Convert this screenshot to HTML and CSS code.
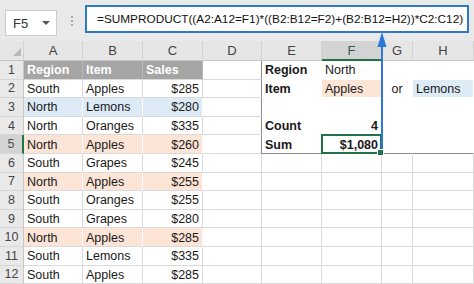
FILE: index.html
```html
<!DOCTYPE html>
<html>
<head>
<meta charset="utf-8">
<link rel="stylesheet" href="styles.css">
</head>
<body>
<div class="topbar">
  <div class="namebox"><span>F5</span><span class="caret"></span></div>
  <div class="dots"><i></i><i></i><i></i></div>
  <div class="formula">=SUMPRODUCT((A2:A12=F1)*((B2:B12=F2)+(B2:B12=H2))*C2:C12)</div>
</div>
<div class="sheet">
  <div class="ch corner"><svg width="8" height="8" viewBox="0 0 8 8"><polygon points="8,0 8,8 0,8" fill="#b9b9b9"/></svg></div>
  <div class="ch">A</div><div class="ch">B</div><div class="ch">C</div><div class="ch">D</div><div class="ch">E</div><div class="ch sel">F</div><div class="ch">G</div><div class="ch">H</div>

  <div class="rh">1</div>
  <div class="c hd b">Region</div><div class="c hd b">Item</div><div class="c hd b">Sales</div><div class="c dx"></div>
  <div class="c bx b">Region</div><div class="c bx">North</div><div class="c bx"></div><div class="c bx"></div>

  <div class="rh">2</div>
  <div class="c">South</div><div class="c">Apples</div><div class="c r">$285</div><div class="c dx"></div>
  <div class="c bx b">Item</div><div class="c bx pe">Apples</div><div class="c bx ctr">or</div><div class="c bx bl">Lemons</div>

  <div class="rh">3</div>
  <div class="c bl">North</div><div class="c bl">Lemons</div><div class="c bl r">$280</div><div class="c dx"></div>
  <div class="c bx"></div><div class="c bx"></div><div class="c bx"></div><div class="c bx"></div>

  <div class="rh">4</div>
  <div class="c">North</div><div class="c">Oranges</div><div class="c r">$335</div><div class="c dx"></div>
  <div class="c bx b">Count</div><div class="c bx b r">4</div><div class="c bx"></div><div class="c bx"></div>

  <div class="rh sel">5</div>
  <div class="c pe">North</div><div class="c pe">Apples</div><div class="c pe r">$260</div><div class="c dx"></div>
  <div class="c bx bb b">Sum</div><div class="c bx bb b r active">$1,080</div><div class="c bx bb"></div><div class="c bx bb"></div>

  <div class="rh">6</div>
  <div class="c">South</div><div class="c">Grapes</div><div class="c r">$245</div><div class="c"></div><div class="c"></div><div class="c"></div><div class="c"></div><div class="c"></div>

  <div class="rh">7</div>
  <div class="c pe">North</div><div class="c pe">Apples</div><div class="c pe r">$255</div><div class="c"></div><div class="c"></div><div class="c"></div><div class="c"></div><div class="c"></div>

  <div class="rh">8</div>
  <div class="c">South</div><div class="c">Oranges</div><div class="c r">$255</div><div class="c"></div><div class="c"></div><div class="c"></div><div class="c"></div><div class="c"></div>

  <div class="rh">9</div>
  <div class="c">South</div><div class="c">Grapes</div><div class="c r">$280</div><div class="c"></div><div class="c"></div><div class="c"></div><div class="c"></div><div class="c"></div>

  <div class="rh">10</div>
  <div class="c pe">North</div><div class="c pe">Apples</div><div class="c pe r">$285</div><div class="c"></div><div class="c"></div><div class="c"></div><div class="c"></div><div class="c"></div>

  <div class="rh">11</div>
  <div class="c">South</div><div class="c">Lemons</div><div class="c r">$335</div><div class="c"></div><div class="c"></div><div class="c"></div><div class="c"></div><div class="c"></div>

  <div class="rh">12</div>
  <div class="c">South</div><div class="c">Apples</div><div class="c r">$285</div><div class="c"></div><div class="c"></div><div class="c"></div><div class="c"></div><div class="c"></div>
</div>
<svg class="arrow" width="14" height="124" viewBox="0 0 14 124">
  <line x1="7" y1="10" x2="7" y2="124" stroke="#2b7bd6" stroke-width="2"/>
  <polygon points="7,0 2.5,15 11.5,15" fill="#2b7bd6"/>
</svg>
</body>
</html>
```

FILE: styles.css
```css
* { box-sizing: border-box; }
html, body { margin: 0; padding: 0; }
body {
  width: 474px;
  height: 284px;
  overflow: hidden;
  position: relative;
  background: #fff;
  font-family: "Liberation Sans", Arial, sans-serif;
  color: #1a1a1a;
}
.topbar {
  height: 41px;
  background: #e9e9e9;
  display: flex;
  align-items: flex-start;
}
.namebox {
  margin: 10px 0 0 5px;
  width: 52px;
  height: 26px;
  background: #fff;
  border: 1px solid #cdcdcd;
  display: flex;
  align-items: center;
  justify-content: space-between;
  padding: 0 6px 0 7px;
  font-size: 13px;
  color: #333;
}
.caret {
  width: 0;
  height: 0;
  border-left: 4px solid transparent;
  border-right: 4px solid transparent;
  border-top: 4px solid #555;
}
.dots {
  margin: 16px 0 0 14px;
  display: flex;
  flex-direction: column;
  gap: 2px;
}
.dots i {
  display: block;
  width: 2px;
  height: 2px;
  background: #a8a8a8;
}
.formula {
  margin: 5px 0 0 12px;
  width: 384px;
  height: 28px;
  background: #fff;
  border: 2px solid #2e78c4;
  padding-left: 10px;
  display: flex;
  align-items: center;
  font-size: 11.8px;
  color: #111;
  white-space: nowrap;
}
.sheet {
  display: grid;
  grid-template-columns: 24px 59px 60px 60px 59px 60px 60px 31px 61px;
  grid-template-rows: 20px repeat(12, 18.6px);
}
.ch {
  background: #e6e6e6;
  border-right: 1px solid #d2d2d2;
  border-bottom: 1px solid #c4c4c4;
  display: flex;
  align-items: center;
  justify-content: center;
  font-size: 13px;
  color: #444;
}
.ch.corner {
  align-items: flex-end;
  justify-content: flex-end;
  padding: 0 2px 4px 0;
}
.ch.sel {
  background: #d3d3d3;
  border-bottom: 2px solid #217346;
  color: #2f5f43;
}
.rh {
  background: #e9e9e9;
  border-right: 1px solid #c8c8c8;
  border-bottom: 1px solid #d6d6d6;
  display: flex;
  align-items: center;
  justify-content: center;
  font-size: 12.5px;
  color: #444;
}
.rh.sel {
  background: #d3d3d3;
  border-right: 2px solid #217346;
  color: #555;
}
.c {
  border-right: 1px solid #dadada;
  border-bottom: 1px solid #dadada;
  display: flex;
  align-items: center;
  padding: 1px 3px 0 3px;
  font-size: 12.5px;
  white-space: nowrap;
  background: #fff;
}
.c.r { justify-content: flex-end; }
.c.ctr { justify-content: center; }
.c.b { font-weight: bold; }
.c.hd { background: #a5a5a5; color: #fff; border-right-color: #b8b8b8; }
.c.pe { background: #fce4d6; border-right-color: #fff; }
.c.bl { background: #ddebf7; border-right-color: #fff; }
.c.dx { border-right-color: #8a8a8a; }
.c.bx { border-right-color: #fff; border-bottom-color: #fff; }
.c.bx.pe, .c.bx.bl { border-right-color: #fff; }
.c.bb { border-bottom-color: #8a8a8a; }
.c.active { position: relative; }
.c.active::after {
  content: "";
  position: absolute;
  left: -1px;
  top: -1px;
  right: -1px;
  bottom: -1px;
  border: 2px solid #217346;
}
.c.active::before {
  content: "";
  position: absolute;
  right: -3px;
  bottom: -3px;
  width: 5px;
  height: 5px;
  background: #217346;
  border: 1px solid #fff;
  z-index: 2;
}
.arrow {
  position: absolute;
  left: 375px;
  top: 32px;
}
```
